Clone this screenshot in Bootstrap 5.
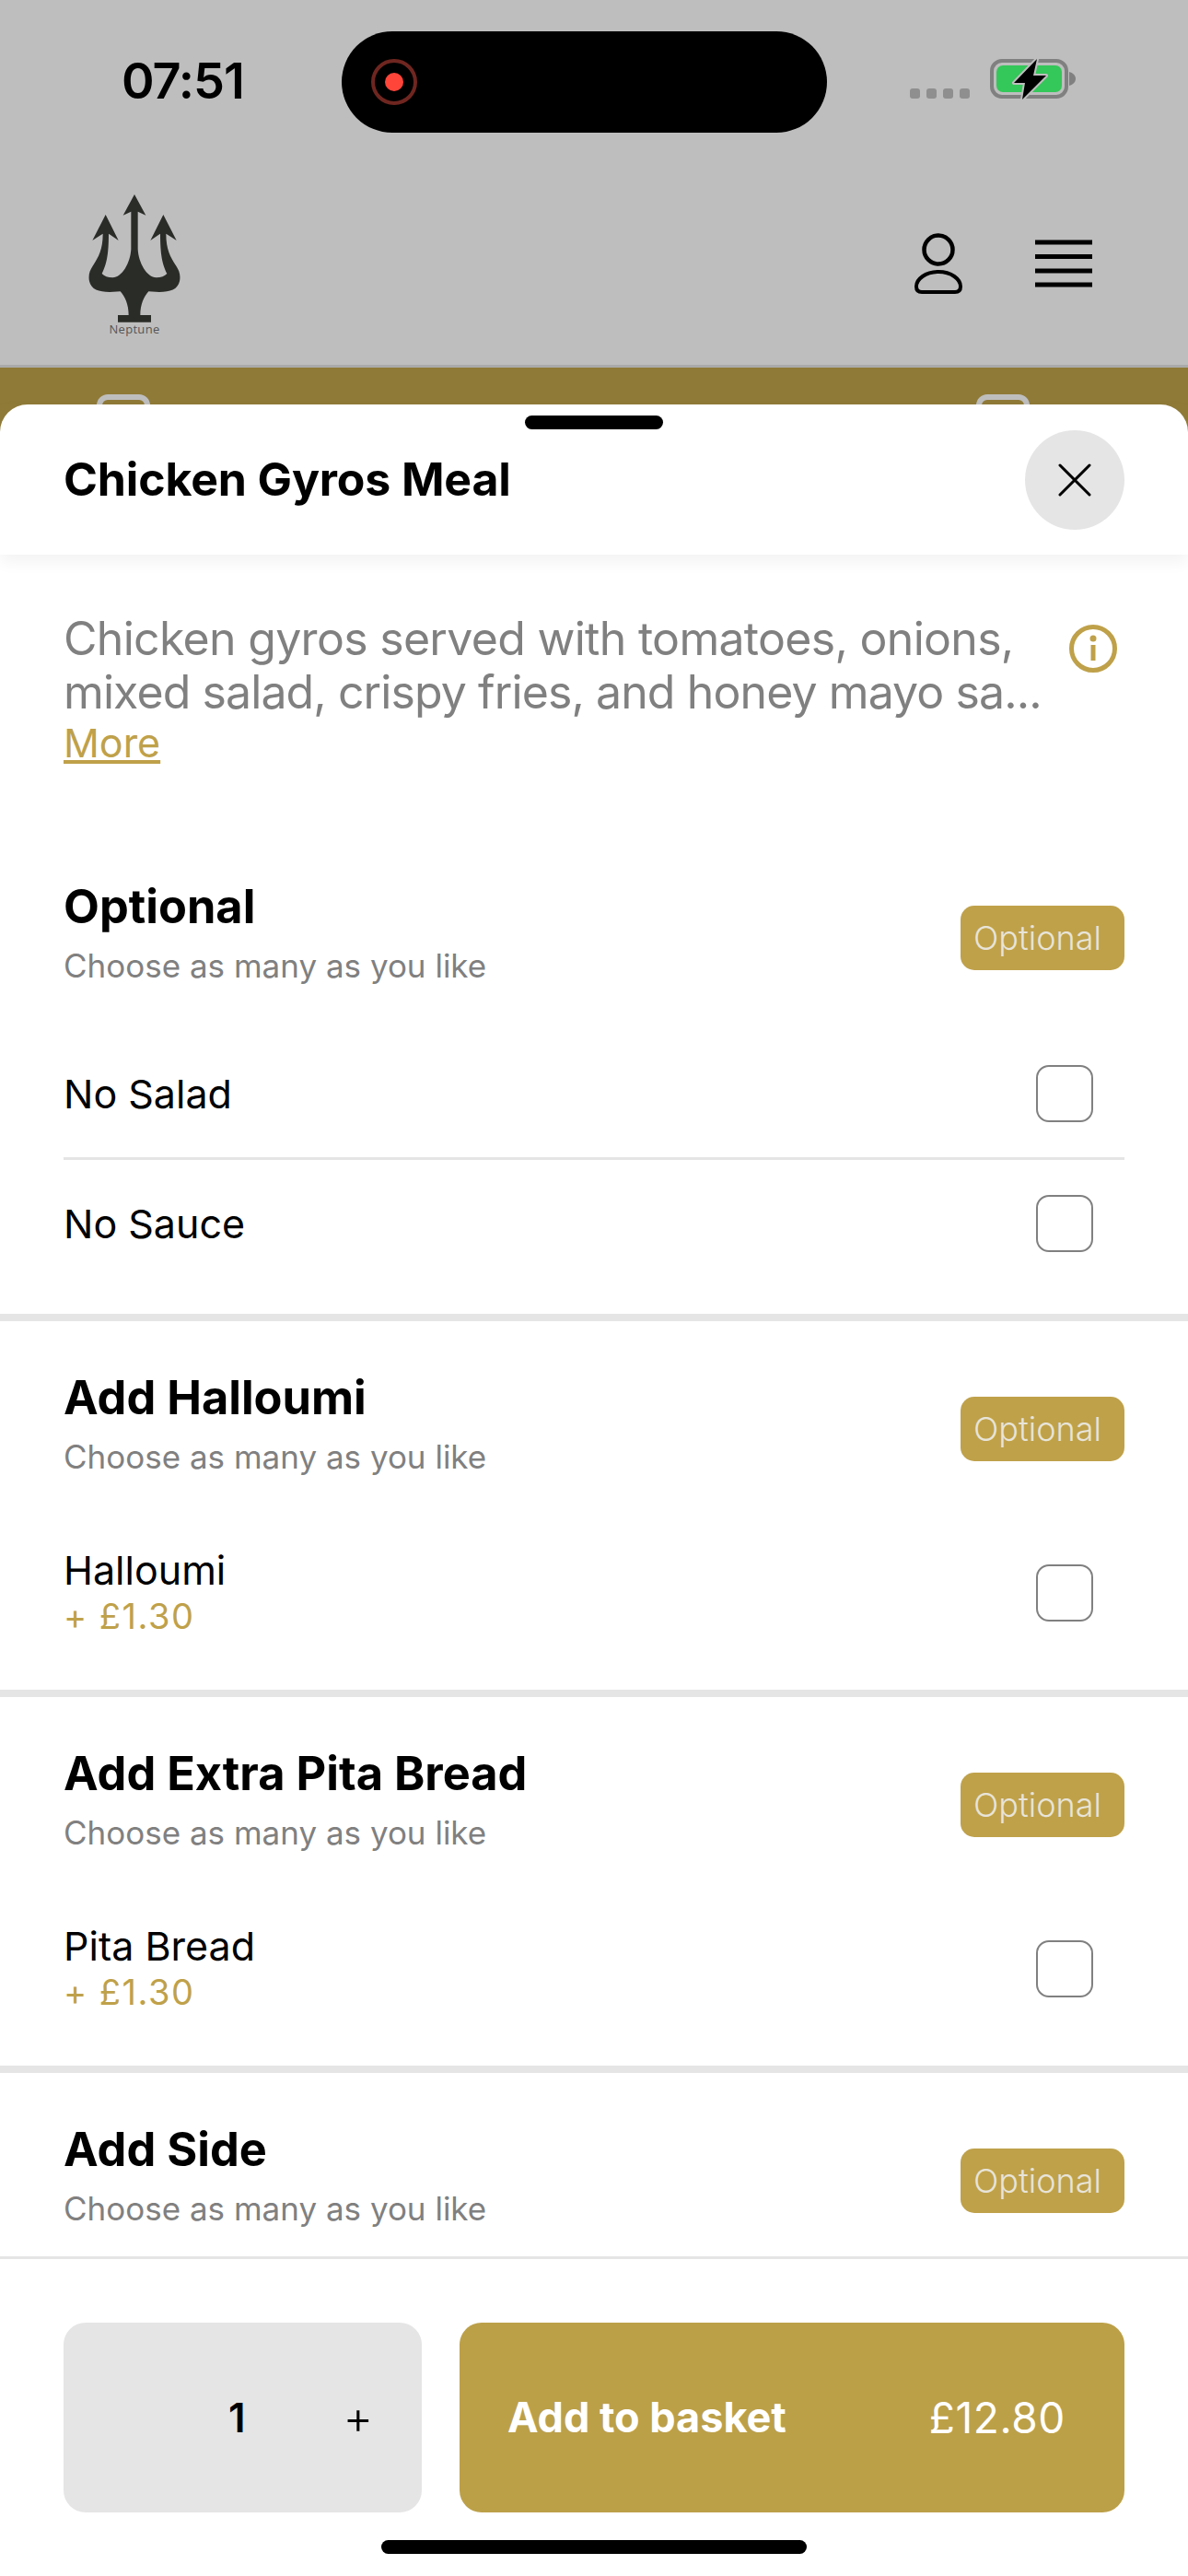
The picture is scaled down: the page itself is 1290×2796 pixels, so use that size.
<!DOCTYPE html>
<html lang="en">
<head>
    <meta charset="UTF-8">
    <meta name="viewport" content="width=device-width, initial-scale=1.0">
    <title>Chicken Gyros Meal</title>
    <link href="https://cdn.jsdelivr.net/npm/bootstrap@5.3.0/dist/css/bootstrap.min.css" rel="stylesheet">
    <style>
        html, body {
            height: 2796px;
            overflow: hidden;
        }
        body {
            background-color: #bebebe;
            font-family: Inter, "Liberation Sans", sans-serif;
            color: #000;
            position: relative;
        }
        /* page behind the sheet */
        .top-area {
            height: 396px;
            background-color: #bebebe;
        }
        .status-row {
            height: 178px;
            padding-top: 34px;
        }
        .clock {
            width: 132px;
            margin-left: 132px;
            margin-right: 107px;
            margin-top: 21px;
            font-size: 54px;
            font-weight: 600;
            line-height: 66px;
            letter-spacing: -1px;
        }
        .island {
            width: 527px;
            height: 110px;
            background-color: #000;
            border-radius: 55px;
            padding-left: 32px;
        }
        .rec-ring {
            width: 50px;
            height: 50px;
            border: 4px solid #6f2620;
            border-radius: 50%;
        }
        .rec-dot {
            width: 20px;
            height: 20px;
            background-color: #ff453a;
            border-radius: 50%;
        }
        .signal-dots {
            margin-left: 90px;
            margin-top: 62px;
            gap: 7px;
        }
        .signal-dots span {
            width: 11px;
            height: 11px;
            background-color: #8f8f8f;
            border-radius: 3px;
        }
        .battery {
            margin-left: 22px;
            margin-top: 29px;
        }
        .nav-row {
            height: 218px;
            padding-left: 96px;
            padding-right: 104px;
        }
        .logo-wrap {
            width: 100px;
            margin-top: 33px;
        }
        .logo-name {
            color: #555;
            font-size: 13px;
            line-height: 14px;
            margin-top: -1px;
            font-family: "Open Sans", sans-serif;
            letter-spacing: 0.3px;
        }
        .nav-icons {
            gap: 79px;
            margin-top: 75px;
        }
        .promo-band {
            border-top: 3px solid #aaa;
            height: 100px;
            background-color: #8f7a38;
            padding: 29px 172px 0 105px;
        }
        .promo-icon {
            width: 58px;
            height: 50px;
            border: 6px solid #bebebe;
            border-radius: 12px;
        }
        /* bottom sheet */
        .sheet {
            position: absolute;
            top: 439px;
            left: 0;
            right: 0;
            bottom: 0;
            background-color: #fff;
            border-radius: 30px 30px 0 0;
        }
        .sheet-handle {
            position: absolute;
            top: 12px;
            left: 570px;
            width: 150px;
            height: 15px;
            background-color: #000;
            border-radius: 8px;
        }
        .sheet-head {
            height: 163px;
            padding: 0 69px;
            box-shadow: 0 8px 16px rgba(0, 0, 0, 0.05);
            position: relative;
        }
        .sheet-title {
            font-size: 50px;
            font-weight: 700;
            line-height: 58px;
            letter-spacing: -0.15px;
            margin: 0 0 2px;
        }
        .close-round {
            width: 108px;
            height: 108px;
            border: 0;
            padding: 0;
            background-color: #e5e5e5;
            border-radius: 50%;
        }
        .sheet-scroll {
            height: 1847px;
            overflow: hidden;
        }
        .describe {
            padding: 62px 69px 69px;
        }
        .describe-text {
            color: #808080;
            font-size: 50px;
            line-height: 58px;
            letter-spacing: -0.7px;
            margin: 0;
            white-space: nowrap;
        }
        .describe-tail {
            letter-spacing: -0.9px;
        }
        .more-link {
            display: block;
            color: #bfa14a;
            font-size: 43px;
            line-height: 52px;
        }
        .info-icon {
            flex-shrink: 0;
            margin-top: 14px;
            margin-right: 8px;
        }
        .option-group {
            padding: 53px 69px 27px;
            border-bottom: 8px solid #e5e5e5;
        }
        .option-group.first-group {
            padding-top: 0;
            padding-bottom: 29px;
            margin-top: 53px;
        }
        .group-head {
            height: 116px;
            margin-bottom: 47px;
        }
        .group-title {
            font-size: 50.5px;
            font-weight: 700;
            line-height: 60px;
            margin: 0 0 12px;
        }
        .group-sub {
            color: #808080;
            font-size: 35px;
            line-height: 44px;
            margin: 0;
        }
        .optional-tag {
            width: 178px;
            height: 70px;
            margin-top: 29px;
            padding-left: 14px;
            background-color: #bfa14a;
            color: #e8e4d8;
            font-size: 36px;
            font-weight: 300;
            border-radius: 15px;
        }
        .option-row {
            height: 139px;
            font-size: 43px;
        }
        .option-row + .option-row {
            border-top: 3px solid #e5e5e5;
            height: 141px;
        }
        .option-row.with-price {
            height: 157px;
        }
        .option-name {
            line-height: 50px;
        }
        .option-price {
            color: #bfa14a;
            font-size: 38px;
            line-height: 50px;
            letter-spacing: 1.5px;
        }
        .tick-box.form-check-input {
            width: 62px;
            height: 62px;
            margin: 0 34px 0 0;
            border: 2px solid #808080;
            border-radius: 14px;
        }
        .sheet-foot {
            height: 347px;
            border-top: 3px solid #e5e5e5;
            padding: 69px 69px 0;
        }
        .qty-box {
            width: 389px;
            height: 206px;
            background-color: #e5e5e5;
            border-radius: 24px;
            margin-right: 41px;
            font-size: 44px;
        }
        .qty-num {
            font-weight: 600;
            margin-left: 179px;
        }
        .qty-plus {
            margin-left: 106px;
            font-size: 50px;
            font-weight: 300;
        }
        .basket-btn.btn {
            flex: 1;
            height: 206px;
            background-color: #bca048;
            color: #fff;
            border: 0;
            border-radius: 24px;
            padding: 0 64px 0 52px;
            font-size: 45px;
        }
        .basket-label {
            font-weight: 700;
        }
        .basket-price {
            font-size: 46px;
            letter-spacing: 0.6px;
        }
        .home-bar {
            width: 462px;
            height: 15px;
            margin: 30px auto 0;
            background-color: #000;
            border-radius: 8px;
        }
    </style>
</head>
<body>

<!-- Page behind the sheet -->
<div class="top-area">
    <div class="status-row d-flex align-items-start">
        <div class="clock">07:51</div>
        <div class="island d-flex align-items-center">
            <div class="rec-ring d-flex align-items-center justify-content-center">
                <div class="rec-dot"></div>
            </div>
        </div>
        <div class="signal-dots d-flex"><span></span><span></span><span></span><span></span></div>
        <svg class="battery" width="93" height="46" viewBox="0 0 93 46">
            <rect x="2" y="3" width="81" height="39" rx="11" fill="none" stroke="#808080" stroke-width="4"/>
            <rect x="7" y="8" width="71" height="29" rx="7" fill="#34c759"/>
            <path d="M86 15 C90 16 93 19 93 22.5 C93 26 90 29 86 30 Z" fill="#808080"/>
            <path d="M51 1 L26 27 L38 27 L35 45 L61 19 L47 19 Z" fill="#000" stroke="#bebebe" stroke-width="4" stroke-linejoin="round" paint-order="stroke"/>
        </svg>
    </div>
    <div class="nav-row d-flex justify-content-between align-items-start">
        <div class="logo-wrap text-center">
            <svg width="100" height="140" viewBox="109 62 300 420">
                <path fill="#2a2c28" d="M259 62 L296 130 L270 118 L270 240 C272 285 300 333 330 333 C345 333 358 328 365 320 C350 290 343 260 343 190 L311 212 L353 128 L396 212 L362 190 C362 240 375 265 395 295 C405 310 410 325 406 345 C400 372 375 380 340 380 L305 378 C290 395 278 420 278 455 L313 455 L313 478 L205 478 L205 455 L240 455 C240 420 228 395 213 378 L178 380 C143 380 118 372 112 345 C108 325 113 310 123 295 C143 265 156 240 156 190 L122 212 L165 128 L207 212 L175 190 C175 260 168 290 153 320 C160 328 173 333 188 333 C218 333 246 285 248 240 L248 118 L222 130 Z"/>
            </svg>
            <div class="logo-name">Neptune</div>
        </div>
        <div class="nav-icons d-flex align-items-center">
            <svg width="52" height="66" viewBox="0 0 52 66">
                <circle cx="26" cy="18" r="15.5" fill="none" stroke="#000" stroke-width="4.5"/>
                <path d="M8 64 H44 C48 64 50 62 50 58 C50 50 40 42 26 42 C12 42 2 50 2 58 C2 62 4 64 8 64 Z" fill="none" stroke="#000" stroke-width="4"/>
            </svg>
            <svg width="62" height="52" viewBox="0 0 62 52">
                <path d="M0 3 H62 M0 18.5 H62 M0 34 H62 M0 49 H62" stroke="#000" stroke-width="5"/>
            </svg>
        </div>
    </div>
</div>
<div class="promo-band d-flex justify-content-between">
    <div class="promo-icon"></div>
    <div class="promo-icon"></div>
</div>

<!-- Meal options sheet -->
<div class="sheet">
    <div class="sheet-handle"></div>
    <div class="sheet-head d-flex justify-content-between align-items-center">
        <h1 class="sheet-title">Chicken Gyros Meal</h1>
        <button class="close-round d-flex align-items-center justify-content-center" type="button" aria-label="Close">
            <svg width="36" height="36" viewBox="0 0 36 36">
                <path d="M2 2 L34 34 M34 2 L2 34" stroke="#000" stroke-width="3" stroke-linecap="round"/>
            </svg>
        </button>
    </div>

    <div class="sheet-scroll">
        <div class="describe d-flex justify-content-between align-items-start">
            <div>
                <p class="describe-text">Chicken gyros served with tomatoes, onions,<br><span class="describe-tail">mixed salad, crispy fries, and honey mayo sa...</span></p>
                <a class="more-link" href="#">More</a>
            </div>
            <svg class="info-icon" width="52" height="52" viewBox="0 0 52 52">
                <circle cx="26" cy="26" r="23.5" fill="none" stroke="#bfa14a" stroke-width="5"/>
                <circle cx="26" cy="15" r="3.5" fill="#bfa14a"/>
                <rect x="23.5" y="22" width="5" height="17" fill="#bfa14a"/>
            </svg>
        </div>

        <div class="option-group first-group">
            <div class="group-head d-flex justify-content-between align-items-start">
                <div>
                    <h2 class="group-title">Optional</h2>
                    <p class="group-sub">Choose as many as you like</p>
                </div>
                <span class="optional-tag d-flex align-items-center justify-content-start">Optional</span>
            </div>
            <div class="option-row d-flex justify-content-between align-items-center">
                <span class="option-name">No Salad</span>
                <input class="form-check-input tick-box" type="checkbox" aria-label="No Salad">
            </div>
            <div class="option-row d-flex justify-content-between align-items-center">
                <span class="option-name">No Sauce</span>
                <input class="form-check-input tick-box" type="checkbox" aria-label="No Sauce">
            </div>
        </div>

        <div class="option-group">
            <div class="group-head d-flex justify-content-between align-items-start">
                <div>
                    <h2 class="group-title">Add Halloumi</h2>
                    <p class="group-sub">Choose as many as you like</p>
                </div>
                <span class="optional-tag d-flex align-items-center justify-content-start">Optional</span>
            </div>
            <div class="option-row with-price d-flex justify-content-between align-items-center">
                <div>
                    <div class="option-name">Halloumi</div>
                    <div class="option-price">+ £1.30</div>
                </div>
                <input class="form-check-input tick-box" type="checkbox" aria-label="Halloumi">
            </div>
        </div>

        <div class="option-group">
            <div class="group-head d-flex justify-content-between align-items-start">
                <div>
                    <h2 class="group-title">Add Extra Pita Bread</h2>
                    <p class="group-sub">Choose as many as you like</p>
                </div>
                <span class="optional-tag d-flex align-items-center justify-content-start">Optional</span>
            </div>
            <div class="option-row with-price d-flex justify-content-between align-items-center">
                <div>
                    <div class="option-name">Pita Bread</div>
                    <div class="option-price">+ £1.30</div>
                </div>
                <input class="form-check-input tick-box" type="checkbox" aria-label="Pita Bread">
            </div>
        </div>

        <div class="option-group">
            <div class="group-head d-flex justify-content-between align-items-start">
                <div>
                    <h2 class="group-title">Add Side</h2>
                    <p class="group-sub">Choose as many as you like</p>
                </div>
                <span class="optional-tag d-flex align-items-center justify-content-start">Optional</span>
            </div>
        </div>
    </div>

    <div class="sheet-foot">
        <div class="d-flex">
            <div class="qty-box d-flex align-items-center">
                <span class="qty-num">1</span>
                <span class="qty-plus">+</span>
            </div>
            <button class="btn basket-btn d-flex justify-content-between align-items-center" type="button">
                <span class="basket-label">Add to basket</span>
                <span class="basket-price">£12.80</span>
            </button>
        </div>
        <div class="home-bar"></div>
    </div>
</div>

<script src="https://cdn.jsdelivr.net/npm/bootstrap@5.3.0/dist/js/bootstrap.bundle.min.js"></script>
</body>
</html>
